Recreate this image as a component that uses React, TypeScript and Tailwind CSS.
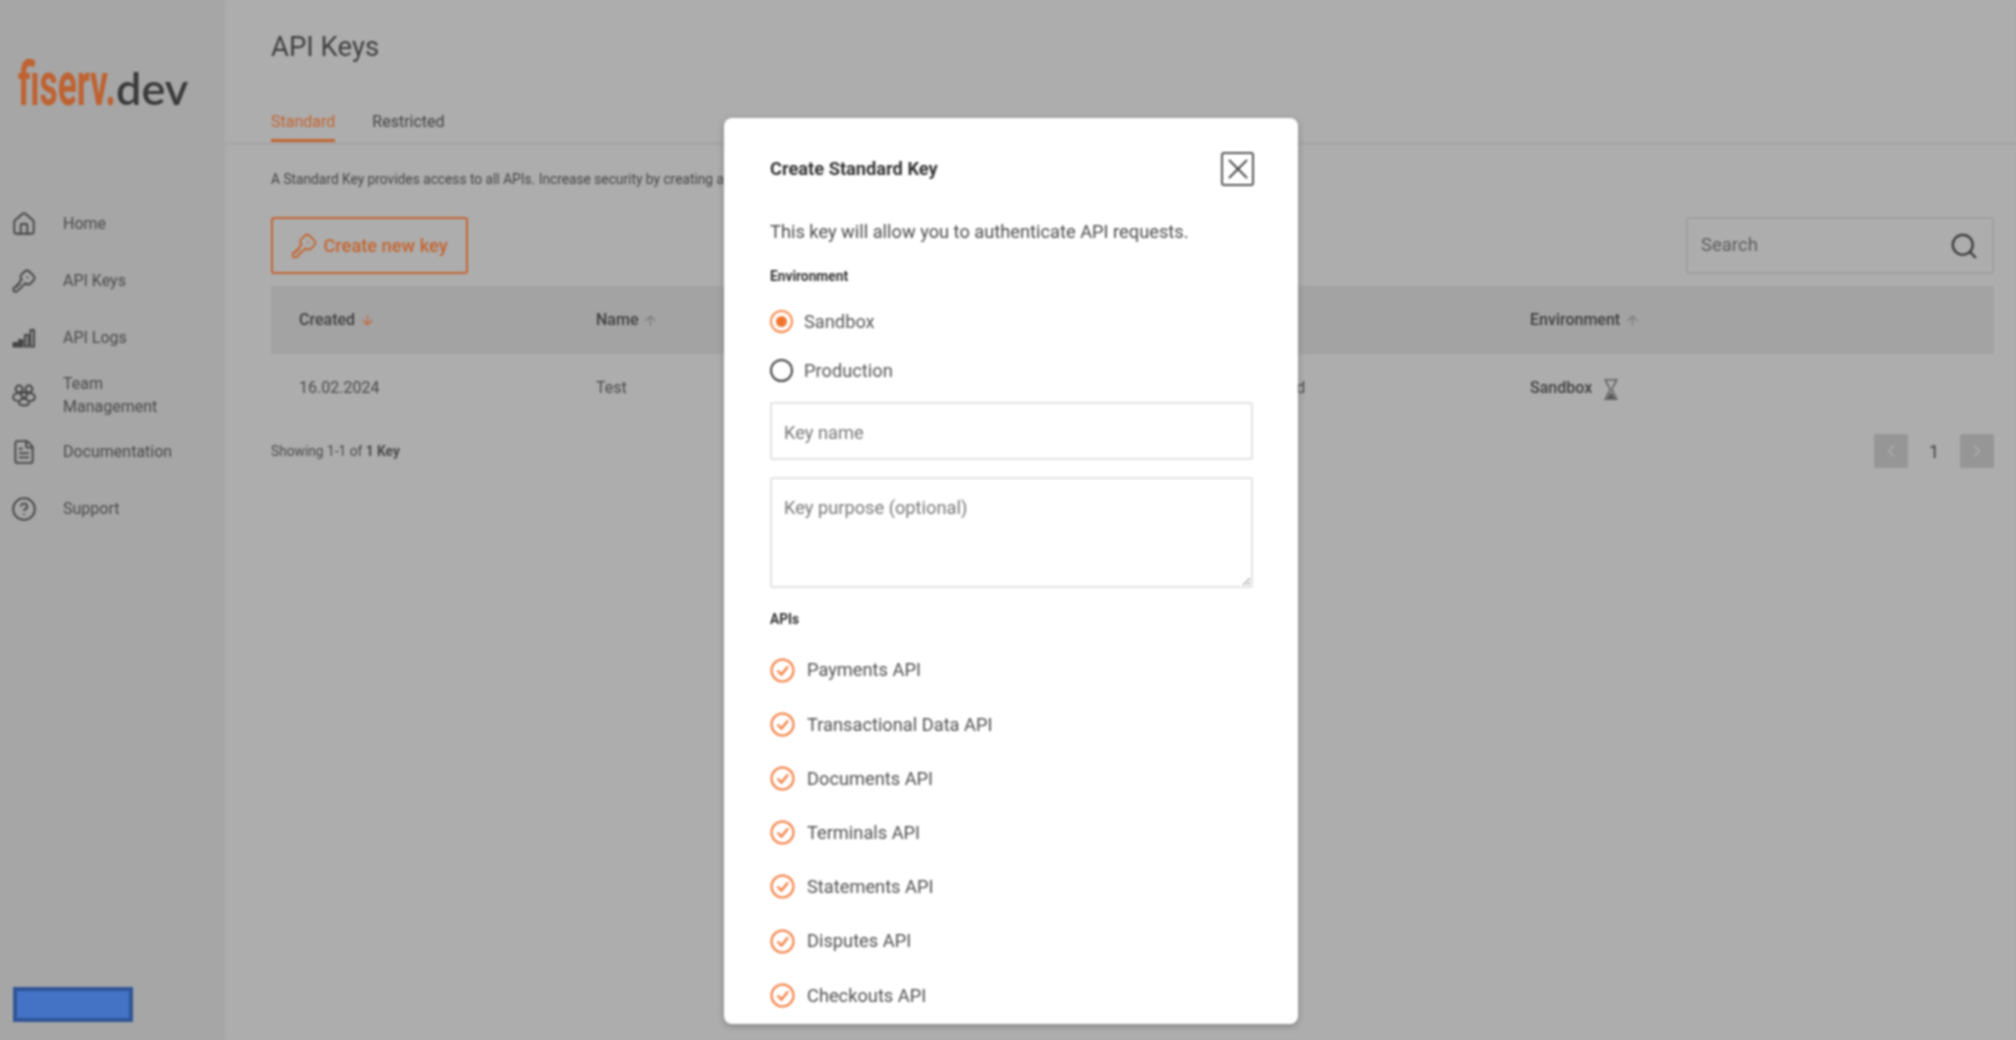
import { ArrowDown, ArrowUp, ChevronLeft, ChevronRight, CircleHelp, FileText, House, Search, X } from 'lucide-react'
import { TbKey } from 'react-icons/tb'

const ROBOTO = { fontFamily: 'Roboto, "Liberation Sans", sans-serif' }

const APIS = [
    'Payments API',
    'Transactional Data API',
    'Documents API',
    'Terminals API',
    'Statements API',
    'Disputes API',
    'Checkouts API',
]

function BarsIcon() {
    return (
        <svg width="24" height="24" viewBox="0 0 24 24" fill="none" stroke="#444" strokeWidth="1.9">
            <rect x="1.5" y="17" width="3.5" height="3.5" fill="#444" />
            <rect x="7" y="14" width="3.5" height="6.5" fill="#444" />
            <rect x="13" y="9" width="3.5" height="11.5" />
            <rect x="18.5" y="4" width="3.5" height="16.5" />
        </svg>
    )
}

function TeamIcon() {
    return (
        <svg width="26" height="26" viewBox="0 0 24 24" fill="none" stroke="#444" strokeWidth="1.8">
            <circle cx="7.500" cy="6.500" r="3.200" />
            <circle cx="16.500" cy="6.500" r="3.200" />
            <circle cx="12" cy="12" r="2.600" />
            <path d="M7 17.500c-3 0-5-1.200-5-3.500 0-2 1.800-3.500 4-3.500h2.500M17 17.500c3 0 5-1.200 5-3.500 0-2-1.800-3.500-4-3.500h-2.500" />
            <path d="M7.500 19.500c0-2.300 2-4 4.500-4s4.500 1.700 4.500 4c0 1.200-2 2-4.500 2s-4.500-.8-4.500-2z" />
        </svg>
    )
}

function HourglassIcon() {
    return (
        <svg width="18" height="23" viewBox="0 0 16 20" fill="none" className="translate-y-[1px]">
            <path d="M2 1.500h12M2 18.500h12M3.500 1.500c0 4 3.500 5.500 3.500 8.500s-3.500 4.500-3.500 8.500M12.500 1.500c0 4-3.500 5.500-3.500 8.500s3.500 4.500 3.500 8.500" stroke="#555" strokeWidth="1.200" />
            <path d="M8 12.500l4 6H4z" fill="#555" />
        </svg>
    )
}

function CheckIcon() {
    return (
        <svg width="25" height="25" viewBox="0 0 25 25" fill="none" stroke="#f47c3c" strokeWidth="2">
            <circle cx="12.500" cy="12.500" r="11" />
            <path d="M7.500 12.500l4 4 6.500-8" strokeWidth="2.200" />
        </svg>
    )
}

function NavItem({ icon, label }: { icon: React.ReactNode; label: React.ReactNode }) {
    return (
        <div className="flex h-[57px] items-center">
            <div className="flex w-[63px] justify-center pr-[15px] text-[#444]">{icon}</div>
            <div className="text-[16px] leading-[23px] text-[#4a4a4a]">{label}</div>
        </div>
    )
}

function Radio({ label, selected }: { label: string; selected?: boolean }) {
    return (
        <div className="flex h-[49px] items-center gap-[11px]">
            <div className={`flex h-[23px] w-[23px] items-center justify-center rounded-full border-2 ${selected ? 'border-[#f58a4d]' : 'border-[#444]'}`}>
                {selected && <div className="h-[11px] w-[11px] rounded-full bg-[#f0762f]" />}
            </div>
            <span className="text-[18.250px] text-[#555]">{label}</span>
        </div>
    )
}

export default function App() {
    return (
        <div className="h-screen overflow-hidden bg-[#a9a9a9]">
            <div className="relative flex h-full bg-[#adadad] blur-[0.8px]" style={ROBOTO}>
                {/* Sidebar */}
                <aside className="flex w-[225px] shrink-0 flex-col bg-[#a6a6a6]">
                    <div className="flex h-[195px] items-start pt-[48px] pl-[18px]">
                        <div className="flex items-baseline">
                            <span className="w-[98px] origin-left scale-x-[0.57] text-[62px] leading-[72px] font-bold whitespace-nowrap text-[#bf6231]">fiserv.</span>
                            <span className="text-[45px] leading-[72px] font-semibold text-[#3a3a3a]" style={{ fontFamily: 'Lato, sans-serif' }}>dev</span>
                        </div>
                    </div>
                    <nav className="flex flex-col">
                        <NavItem icon={<House size={26} strokeWidth={1.700} />} label="Home" />
                        <NavItem icon={<TbKey size={28} strokeWidth={1.600} />} label="API Keys" />
                        <NavItem icon={<BarsIcon />} label="API Logs" />
                        <NavItem icon={<TeamIcon />} label={<>Team<br />Management</>} />
                        <NavItem icon={<FileText size={26} strokeWidth={1.700} />} label="Documentation" />
                        <NavItem icon={<CircleHelp size={26} strokeWidth={1.700} />} label="Support" />
                    </nav>
                    <div className="mt-auto mb-[18px] ml-[13px] h-[35px] w-[120px] border-[4px] border-[#2f5597] bg-[#4472c4]" />
                </aside>

                {/* Main */}
                <main className="flex min-w-0 flex-1 flex-col">
                    <div className="flex h-[145px] flex-col justify-between border-b-[3px] border-[#a6a6a6] pt-[31px] pl-[46px]">
                        <h1 className="text-[27.500px] leading-[32px] text-[#404040]">API Keys</h1>
                        <div className="flex gap-[37px] text-[16px]">
                            <div className="border-b-[3px] border-[#c4652f] pb-[5px] text-[#c4652f]">Standard</div>
                            <div className="pb-[8px] text-[#444]">Restricted</div>
                        </div>
                    </div>
                    <div className="flex flex-1 flex-col pt-[25px] pr-[22px] pl-[46px]">
                        <p className="text-[13.750px] leading-[18px] text-[#454545]">
                            A Standard Key provides access to all APIs. Increase security by creating a
                        </p>
                        <div className="mt-[29px] flex items-center justify-between">
                            <button type="button" className="flex h-[57px] w-[197px] items-center justify-center gap-[4px] rounded-[3px] border-2 border-[#c4652f] pr-[2px] text-[18.250px] font-medium text-[#c4652f]">
                                <TbKey size={30} strokeWidth={1.500} />
                                Create new key
                            </button>
                            <div className="flex h-[57px] w-[308px] items-center justify-between rounded-[3px] border-2 border-[#a0a0a0] pr-[13px] pl-[13px]">
                                <span className="pt-[1px] text-[18.500px] text-[#5e5e5e]">Search</span>
                                <Search size={30} strokeWidth={1.800} className="text-[#3a3a3a]" />
                            </div>
                        </div>
                        <div className="mt-[12px] grid h-[68px] grid-cols-[297px_645px_289px_1fr] items-center bg-[#a3a3a3] pl-[28px] text-[16px] font-medium text-[#3f3f3f]">
                            <div className="flex items-center gap-[5px]">Created <ArrowDown size={15} className="text-[#c4652f]" /></div>
                            <div className="flex items-center gap-[5px]">Name <ArrowUp size={15} className="text-[#7a7a7a]" /></div>
                            <div className="flex items-center gap-[5px]">Type <ArrowUp size={15} className="text-[#7a7a7a]" /></div>
                            <div className="flex items-center gap-[5px]">Environment <ArrowUp size={15} className="text-[#7a7a7a]" /></div>
                        </div>
                        <div className="grid h-[68px] grid-cols-[297px_645px_289px_1fr] items-center pl-[28px] text-[16px] text-[#4a4a4a]">
                            <div>16.02.2024</div>
                            <div>Test</div>
                            <div>Standard</div>
                            <div className="flex items-center gap-[10px] font-medium text-[#3f3f3f]">Sandbox <HourglassIcon /></div>
                        </div>
                        <div className="mt-[12px] flex items-center justify-between">
                            <div className="text-[13.750px] text-[#4a4a4a]">Showing 1-1 of <span className="font-bold">1 Key</span></div>
                            <div className="flex items-center">
                                <div className="flex h-[34px] w-[34px] items-center justify-center rounded-[2px] bg-[#969696] text-[#adadad]"><ChevronLeft size={20} /></div>
                                <div className="w-[52px] text-center text-[18px] text-[#3f3f3f]">1</div>
                                <div className="flex h-[34px] w-[34px] items-center justify-center rounded-[2px] bg-[#969696] text-[#adadad]"><ChevronRight size={20} /></div>
                            </div>
                        </div>
                    </div>
                </main>

                {/* Create key dialog */}
                <div className="absolute top-[118px] left-[724px] h-[906px] w-[574px] overflow-hidden rounded-[8px] bg-white px-[46px] shadow-[0_2px_6px_rgba(0,0,0,0.25)]">
                    <div className="flex items-center justify-between pt-[34px]">
                        <h2 className="text-[18.250px] font-bold text-[#333]">Create Standard Key</h2>
                        <button type="button" className="mr-[-2px] flex h-[34px] w-[33px] items-center justify-center rounded-[3px] border-2 border-[#555] text-[#444]">
                            <X size={34} strokeWidth={1.300} className="shrink-0" />
                        </button>
                    </div>
                    <p className="mt-[34px] text-[18.250px] leading-[24px] text-[#4a4a4a]">This key will allow you to authenticate API requests.</p>
                    <div className="mt-[24px] text-[13.750px] leading-[16px] font-bold text-[#333]">Environment</div>
                    <div className="mt-[13px]">
                        <Radio label="Sandbox" selected />
                        <Radio label="Production" />
                    </div>
                    <input placeholder="Key name" className="mt-[7px] block h-[58px] w-[483px] rounded-[3px] border-2 border-[#e2e2e2] px-[12px] pt-[2px] text-[18.250px] placeholder:text-[#777]" />
                    <textarea placeholder="Key purpose (optional)" className="mt-[17px] block h-[111px] w-[483px] rounded-[3px] border-2 border-[#e2e2e2] px-[12px] py-[19px] text-[18.250px] leading-[20px] placeholder:text-[#777]" />
                    <div className="mt-[23px] text-[13.750px] leading-[16px] font-bold text-[#333]">APIs</div>
                    <div className="mt-[16px] flex flex-col">
                        {APIS.map(name => (
                            <div key={name} className="flex h-[54.200px] items-center gap-[12px]">
                                <CheckIcon />
                                <span className="text-[18.250px] text-[#4f4f4f]">{name}</span>
                            </div>
                        ))}
                    </div>
                </div>
            </div>
        </div>
    )
}
